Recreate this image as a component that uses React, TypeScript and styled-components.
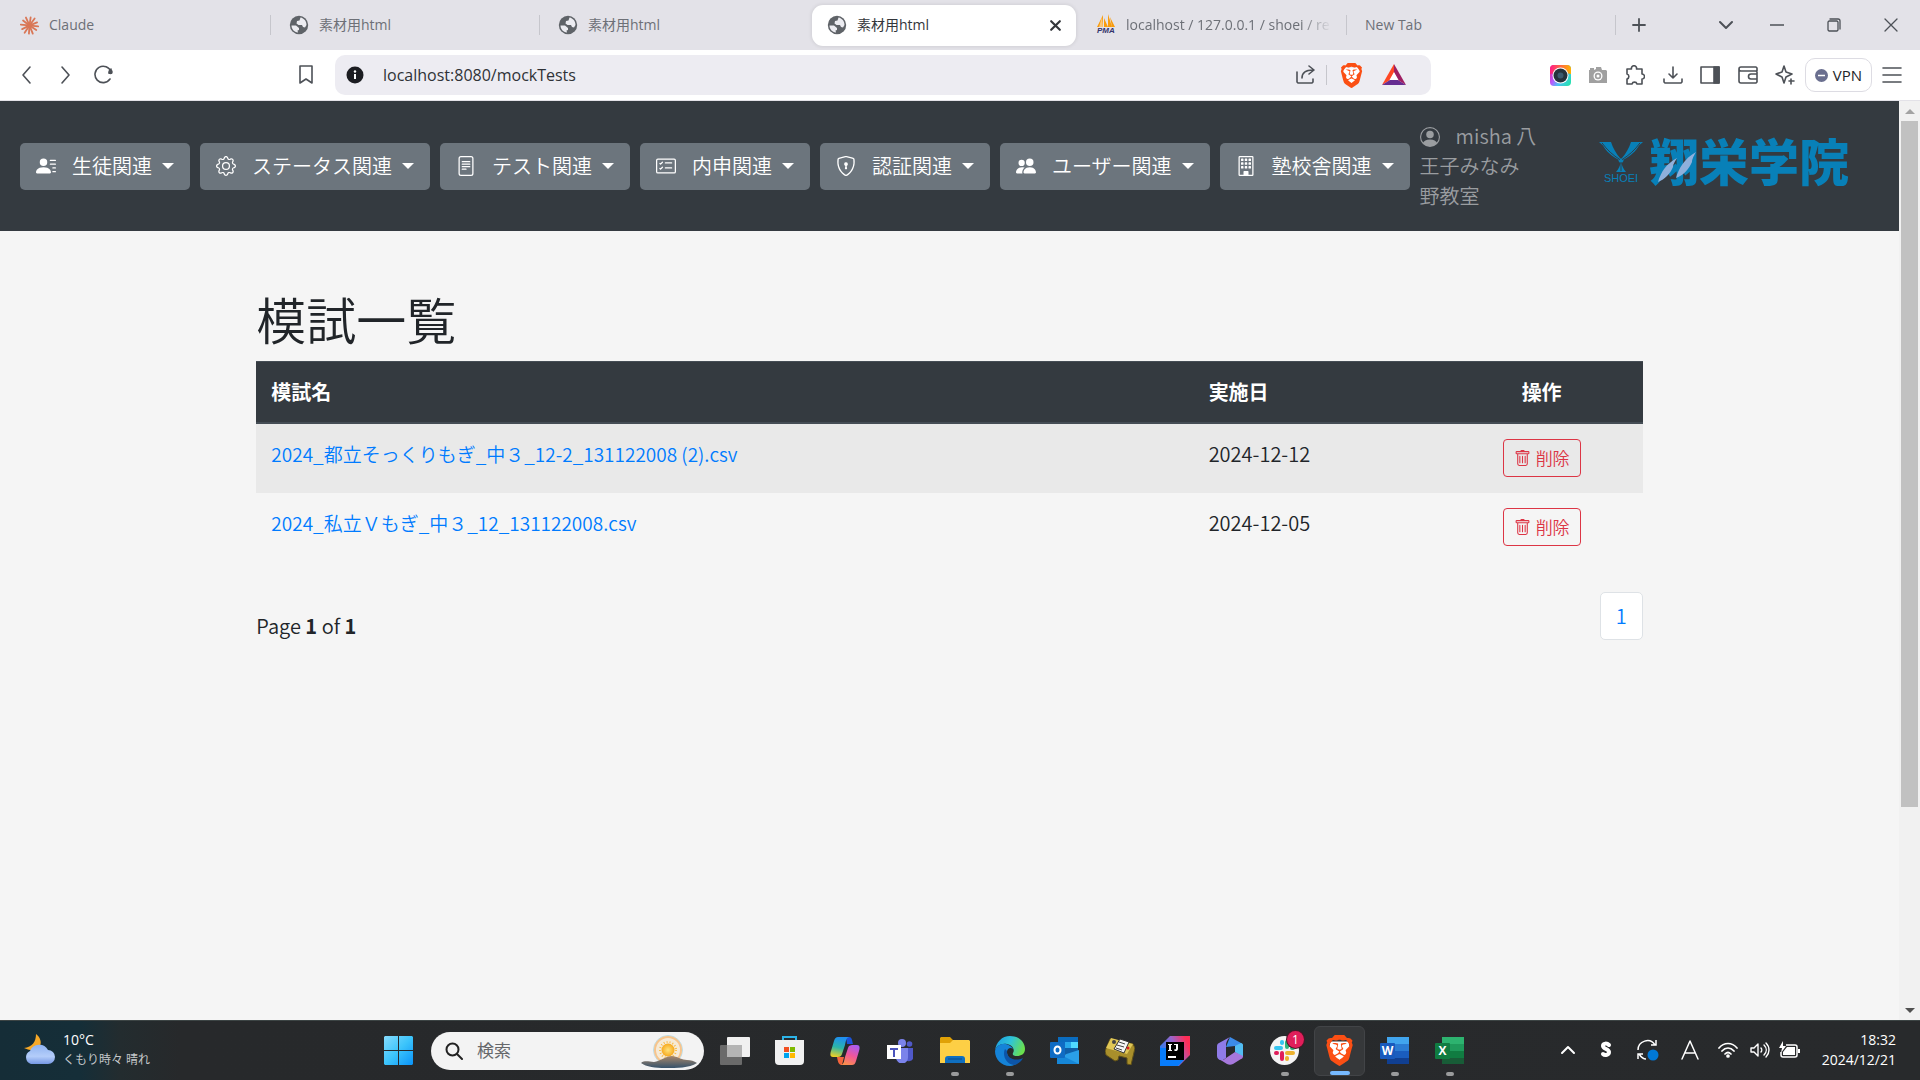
import React from "react";
import styled, { createGlobalStyle } from "styled-components";
import {
  BsPersonLinesFill,
  BsGear,
  BsFileText,
  BsCardChecklist,
  BsShieldLock,
  BsPeopleFill,
  BsBuilding,
  BsPersonCircle,
  BsTrash,
} from "react-icons/bs";
import { SiBrave } from "react-icons/si";

const GlobalStyle = createGlobalStyle`
  *, *::before, *::after { box-sizing: border-box; }
  body {
    margin: 0;
    color: #212529;
    background: #f5f5f5;
    font-family: "Noto Sans CJK JP", "Noto Sans", sans-serif;
    font-size: 20px;
    line-height: 30px;
    font-weight: 350;
  }
  button, input { font: inherit; color: inherit; }
  button { cursor: pointer; }
  svg { display: block; flex: none; }
`;

const uiFont = `"Open Sans", "Noto Sans CJK JP", sans-serif`;

const Screen = styled.div`
  display: flex;
  flex-direction: column;
  min-height: 100vh;
`;

/* ---------- browser tabs ---------- */

const TabStrip = styled.div`
  display: flex;
  align-items: center;
  height: 50px;
  padding-left: 2px;
  background: #e3e2e8;
  font-family: ${uiFont};
  font-size: 14px;
  font-weight: 400;
  line-height: 20px;
`;

const Tab = styled.button<{ $active?: boolean; $divider?: boolean }>`
  display: flex;
  align-items: center;
  gap: 10px;
  flex: 0 1 269px;
  min-width: 0;
  height: ${(p) => (p.$active ? "41px" : "20px")};
  padding: 0 14px 0 18px;
  border: 0;
  border-right: 1px solid ${(p) => (p.$divider ? "#c6c6cc" : "transparent")};
  background: transparent;
  color: #6d7077;
  text-align: left;
  white-space: nowrap;
  ${(p) =>
    p.$active &&
    `
    flex-basis: 264px;
    margin: 0 2px 0 3px;
    padding-left: 15px;
    border: 0;
    border-radius: 11px;
    background: #fff;
    color: #33363b;
    box-shadow: 0 0 4px rgba(0, 0, 0, 0.12);
  `}
`;

const TabTitle = styled.span<{ $fade?: boolean }>`
  flex: 1;
  ${(p) => p.$fade && "mask-image: linear-gradient(90deg, #000 85%, transparent);"}
`;

const IconButton = styled.button<{ $w?: number }>`
  display: flex;
  align-items: center;
  justify-content: center;
  flex: none;
  width: ${(p) => p.$w ?? 38}px;
  height: 40px;
  padding: 0;
  border: 0;
  background: transparent;
  color: #4d5157;
`;

const Spacer = styled.div<{ $w?: number }>`
  flex: ${(p) => (p.$w ? `0 0 ${p.$w}px` : "1")};
`;

/* ---------- browser toolbar ---------- */

const Toolbar = styled.div`
  display: flex;
  align-items: center;
  height: 51px;
  padding: 0 10px 0 8px;
  border-bottom: 1px solid #e3e2e8;
  background: #fff;
  font-family: ${uiFont};
  font-weight: 400;
`;

const AddressBar = styled.div`
  display: flex;
  align-items: center;
  flex: 1;
  height: 40px;
  margin: 0 111px 0 10px;
  padding: 0 16px 0 11px;
  border-radius: 10px;
  background: #edecf2;
`;

const AddressInput = styled.input`
  flex: 1;
  min-width: 0;
  margin-left: 19px;
  padding: 0;
  border: 0;
  outline: 0;
  background: transparent;
  color: #2f3237;
  font-size: 16px;
  line-height: 24px;
`;

const Rule = styled.span`
  width: 1px;
  height: 20px;
  margin: 0 4px;
  background: #c6c6cc;
`;

const VpnButton = styled.button`
  display: flex;
  align-items: center;
  gap: 5px;
  height: 34px;
  margin: 0 2px 0 1px;
  padding: 0 9px;
  border: 1px solid #dddce3;
  border-radius: 10px;
  background: #fff;
  color: #22252a;
  font-size: 15px;
`;

/* ---------- page ---------- */

const Viewport = styled.div`
  display: flex;
  flex: 1;
`;

const Page = styled.div`
  flex: 1;
  min-width: 0;
`;

const Navbar = styled.nav`
  display: flex;
  align-items: center;
  gap: 10px;
  min-height: 130px;
  padding: 10px 50px 10px 20px;
  background: #343a40;
`;

const NavButton = styled.button`
  display: flex;
  align-items: center;
  height: 47px;
  padding: 0 16px;
  border: 0;
  border-radius: 5px;
  background: #6c757d;
  color: #fff;
  white-space: nowrap;
`;

const NavLabel = styled.span`
  margin: 0 10px 0 16px;
`;

const Caret = styled.span`
  width: 0;
  height: 0;
  border: 6px solid transparent;
  border-top-color: currentColor;
  border-bottom: 0;
`;

const UserInfo = styled.div`
  width: 118px;
  color: #9a9da0;
  svg {
    display: inline-block;
    margin-right: 16px;
    vertical-align: -3px;
  }
`;

const Logo = styled.a`
  display: flex;
  align-items: center;
  gap: 6px;
  margin-left: auto;
  padding-bottom: 6px;
  color: #0880b8;
  text-decoration: none;
`;

const LogoMark = styled.span`
  display: flex;
  flex-direction: column;
  align-items: center;
  font: 11px/12px "Liberation Sans", sans-serif;
`;

const LogoName = styled.span`
  position: relative;
  padding-bottom: 8px;
  font-size: 50px;
  line-height: 50px;
  font-weight: 900;
`;

const Feather = styled.svg`
  position: absolute;
  left: 9px;
  top: 18px;
`;

const Main = styled.main`
  width: 73%;
  margin: 0 auto;
  padding-top: 57px;
`;

const Title = styled.h1`
  margin: 0 0 13px;
  font-size: 50px;
  line-height: 60px;
  font-weight: 350;
`;

const Table = styled.table`
  width: 100%;
  border-collapse: collapse;
  table-layout: fixed;
`;

const HeadCell = styled.th<{ $w?: string; $center?: boolean }>`
  width: ${(p) => p.$w ?? "auto"};
  padding: 15px;
  border-top: 1px solid #454d55;
  border-bottom: 2px solid #454d55;
  background: #343a40;
  color: #fff;
  font-weight: 700;
  text-align: ${(p) => (p.$center ? "center" : "left")};
`;

const Row = styled.tr<{ $striped?: boolean }>`
  background: ${(p) => (p.$striped ? "#e9e9e9" : "transparent")};
  & + & td {
    border-top: 1px solid #dee2e6;
  }
`;

const Cell = styled.td<{ $center?: boolean }>`
  padding: 15px 15px 16px;
  vertical-align: top;
  text-align: ${(p) => (p.$center ? "center" : "left")};
`;

const FileLink = styled.a`
  color: #007bff;
  font-size: 19px;
  text-decoration: none;
`;

const DeleteButton = styled.button`
  display: inline-flex;
  align-items: center;
  gap: 5px;
  height: 38px;
  padding: 0 10px;
  border: 1px solid #dc3545;
  border-radius: 4px;
  background: transparent;
  color: #dc3545;
  font-size: 17px;
  vertical-align: top;
`;

const TableFooter = styled.div`
  display: flex;
  align-items: flex-start;
  justify-content: space-between;
  margin-top: 30px;
`;

const PageInfo = styled.p`
  margin: 19px 0 0;
`;

const PageLink = styled.a`
  padding: 8px 15px;
  border: 1px solid #dee2e6;
  border-radius: 5px;
  background: #fff;
  color: #007bff;
  text-decoration: none;
`;

const Scrollbar = styled.div`
  display: flex;
  flex-direction: column;
  align-items: center;
  flex: 0 0 21px;
  background: #f1f1f1;
`;

const ScrollTrack = styled.div`
  flex: 1;
  width: 17px;
`;

const ScrollThumb = styled.div`
  height: 78%;
  background: #c1c1c1;
`;

const ScrollArrow = styled.span<{ $down?: boolean }>`
  margin: 8px 0 7px;
  border: 5px solid transparent;
  ${(p) =>
    p.$down
      ? "border-top-color: #505050; border-bottom: 0;"
      : "border-bottom-color: #a3a3a3; border-top: 0;"}
`;

/* ---------- taskbar ---------- */

const Taskbar = styled.footer`
  display: flex;
  align-items: center;
  height: 60px;
  border-top: 1px solid #3c4444;
  background: linear-gradient(90deg, #152d37 0, #152e38 80px, #232c2f 120px, #27292b 180px, #282a2c);
  color: #fff;
  font-family: ${uiFont};
  font-weight: 400;
`;

const Weather = styled.button`
  display: flex;
  align-items: center;
  gap: 8px;
  flex: 0 0 371px;
  padding: 0 0 2px 24px;
  border: 0;
  background: transparent;
  color: #fff;
  text-align: left;
  font-size: 14px;
  line-height: 20px;
`;

const WeatherNote = styled.span`
  display: block;
  color: #c4c8ca;
  font-size: 12px;
`;

const SearchBox = styled.label`
  display: flex;
  align-items: center;
  flex: 0 0 273px;
  min-width: 0;
  height: 38px;
  margin: 0 3px 0 5px;
  padding: 0 7px 0 14px;
  border-radius: 19px;
  background: #f3f3f3;
  color: #222;
`;

const SearchInput = styled.input`
  flex: 1;
  width: 0;
  min-width: 0;
  margin-left: 14px;
  padding: 0;
  border: 0;
  outline: 0;
  background: transparent;
  font-size: 17px;
  &::placeholder {
    color: #66686b;
    opacity: 1;
  }
`;

const AppButton = styled.button<{ $active?: boolean }>`
  display: flex;
  align-items: center;
  justify-content: center;
  position: relative;
  flex: none;
  width: ${(p) => (p.$active ? "51px" : "55px")};
  height: 50px;
  margin: ${(p) => (p.$active ? "0 2px" : "0")};
  padding: 0;
  border: ${(p) => (p.$active ? "1px solid #424447" : "0")};
  border-radius: 6px;
  background: ${(p) => (p.$active ? "#36383a" : "transparent")};
`;

const RunningMark = styled.span<{ $active?: boolean }>`
  position: absolute;
  left: 50%;
  bottom: 0;
  width: ${(p) => (p.$active ? 20 : 8)}px;
  height: 4px;
  margin-left: ${(p) => (p.$active ? -10 : -4)}px;
  border-radius: 2px;
  background: ${(p) => (p.$active ? "#76b9ff" : "#9a9b9c")};
`;

const Badge = styled.span`
  position: absolute;
  top: 5px;
  right: 8px;
  width: 17px;
  height: 17px;
  border-radius: 50%;
  background: #e01e5a;
  box-shadow: 0 0 0 1px #4b1527;
  color: #fff;
  font-size: 12px;
  line-height: 17px;
`;

const Tray = styled.div`
  display: flex;
  align-items: center;
  margin-left: auto;
  padding: 0 24px 2px 0;
`;

const TrayButton = styled(IconButton)`
  color: #fff;
`;

const Clock = styled.time`
  margin-left: 16px;
  text-align: right;
  font-size: 14px;
  line-height: 20px;
`;

/* ---------- drawings ---------- */

const Line = ({
  d,
  size = 20,
  box = 20,
  w = 1.6,
  children,
}: {
  d: string;
  size?: number;
  box?: number;
  w?: number;
  children?: React.ReactNode;
}) => (
  <svg width={size} height={size} viewBox={`0 0 ${box} ${box}`} fill="none" stroke="currentColor" strokeWidth={w} strokeLinecap="round" strokeLinejoin="round" aria-hidden="true">
    <path d={d} />
    {children}
  </svg>
);

const ClaudeIcon = () => (
  <svg width="19" height="19" viewBox="-10 -10 20 20" stroke="#d97757" strokeWidth="1.9" strokeLinecap="round" aria-hidden="true">
    {[0, 28, 62, 88, 118, 148, 180, 212, 240, 272, 300, 332].map((a, i) => (
      <line key={a} x1="1" y1="0" x2={i % 2 ? 8.6 : 9.2} y2="0" transform={`rotate(${a + 6})`} />
    ))}
  </svg>
);

const GlobeIcon = () => (
  <svg width="20" height="20" viewBox="0 0 20 20" aria-hidden="true">
    <circle cx="10" cy="10" r="9.200" fill="#5f6368" />
    <path d="M2.500 10.500h4.500l3 2.500v2l-1.500.5.500 2C5 17 2.500 14 2.500 10.500z" fill="#ececf1" />
    <path d="M11.500 2.600c3.500.7 6 3.700 6 7.400l-1.500 2.500-2-.5-1-2H9.500L7.500 8.500 8 6l2.500-.5z" fill="#ececf1" />
  </svg>
);

const PmaIcon = () => (
  <svg width="20" height="24" viewBox="0 0 20 24" aria-hidden="true">
    <path d="M7 2 1 14h6zM8 5v9h4zM12 1v13h4zM14 4l5 10h-3z" fill="#f89c0e" />
    <path d="M6 4 3 14h4z" fill="#fbc779" />
    <text x="1" y="20" fontSize="8" fontWeight="700" fontStyle="italic" fill="#34346b" fontFamily="Liberation Sans, sans-serif">PMA</text>
  </svg>
);

const BraveIcon = ({ size }: { size: number }) => (
  <svg width={size} height={size} viewBox="0 0 24 24" aria-hidden="true">
    <path d="M5 5h14l1 5-3 8-5 4-5-4-3-8z" fill="#fff" />
    <SiBrave size={24} color="#fb4f14" />
  </svg>
);

const BatIcon = () => (
  <svg width="24" height="22" viewBox="0 0 24 22" aria-hidden="true">
    <path d="M12 0 0 21l8-5 4-7z" fill="#ff4724" />
    <path d="M0 21h24l-8-5H8z" fill="#662d91" />
    <path d="m12 0 12 21-8-5-4-7z" fill="#9e1f63" />
    <path d="m12 8 4.500 8h-9z" fill="#fff" />
  </svg>
);

const CameraApp = () => (
  <svg width="21" height="21" viewBox="0 0 21 21" aria-hidden="true">
    <defs>
      <linearGradient id="cam" x1="0" y1="0.2" x2="1" y2="0.8">
        <stop offset="0" stopColor="#f0249b" />
        <stop offset="0.35" stopColor="#b65bff" />
        <stop offset="0.6" stopColor="#4fc3f7" />
        <stop offset="1" stopColor="#26e0b0" />
      </linearGradient>
      <linearGradient id="cam2" x1="0" x2="1">
        <stop offset="0" stopColor="#ff1c86" />
        <stop offset="1" stopColor="#ffb300" />
      </linearGradient>
    </defs>
    <rect width="21" height="21" rx="4" fill="url(#cam)" />
    <path d="M4 0h13a4 4 0 0 1 4 4v5L10 7 0 9V4a4 4 0 0 1 4-4z" fill="url(#cam2)" />
    <circle cx="10.500" cy="10.500" r="8" fill="#fff" />
    <circle cx="10.500" cy="10.500" r="7" fill="#26333d" />
    <circle cx="10.500" cy="10.500" r="3" fill="#3c5a6e" />
  </svg>
);

const GreyCamera = () => (
  <svg width="20" height="18" viewBox="0 0 20 18" aria-hidden="true">
    <path d="M1 4h1V2h4v2l2-1V1h5l1 3h4l1 1v12H1V5z" fill="#a0a0a0" />
    <circle cx="10" cy="10" r="4.500" fill="#fff" />
    <circle cx="10" cy="10" r="3.200" fill="#a0a0a0" />
    <circle cx="10" cy="10" r="1.500" fill="#fff" />
  </svg>
);

const ShoeiMark = () => (
  <svg width="44" height="30" viewBox="0 0 44 34" preserveAspectRatio="none" aria-hidden="true">
    <g fill="#0880b8">
      <path d="M0 0h12c2 7 5 13 9 18v3C12 16 7 10 4 4z" />
      <path d="M44 0H32c-2 7-5 13-9 18v3c9-5 14-11 17-17z" />
      <path d="M22 22c1 5 2 8 5 12H17c3-4 4-7 5-12z" />
      <circle cx="22" cy="21" r="2.500" />
    </g>
    <path d="M3 1c5 8 11 14 18 19M41 1c-5 8-11 14-18 19M22 23v10" stroke="#343a40" fill="none" />
  </svg>
);

const WeatherIcon = () => (
  <svg width="31" height="31" viewBox="0 0 31 31" aria-hidden="true">
    <defs>
      <linearGradient id="cloud" x1="0" y1="0" x2="0" y2="1">
        <stop offset="0" stopColor="#8fb3f0" />
        <stop offset="0.6" stopColor="#b4cdfa" />
        <stop offset="1" stopColor="#7598e4" />
      </linearGradient>
    </defs>
    <path d="M12 0c4 3 6 8 4 12-3 5-10 5-16 2 8-1 12-6 12-14z" fill="#f7a928" />
    <path d="M7 30a7 7 0 0 1-1-13 10 10 0 0 1 18-1 7 7 0 0 1 0 14z" fill="url(#cloud)" />
  </svg>
);

const StartIcon = () => (
  <svg width="29" height="29" viewBox="0 0 29 29" aria-hidden="true">
    <defs>
      <linearGradient id="win" x1="0" y1="0" x2="1" y2="1">
        <stop offset="0" stopColor="#87dcfd" />
        <stop offset="0.5" stopColor="#3cc4fb" />
        <stop offset="1" stopColor="#0a93f8" />
      </linearGradient>
    </defs>
    <path d="M1 0h13v14H0V1zM15 0h13l1 1v13H15zM0 15h14v14H1l-1-1zM15 15h14v13l-1 1H15z" fill="url(#win)" />
  </svg>
);

const SunArt = () => (
  <svg width="56" height="34" viewBox="0 0 56 34" aria-hidden="true">
    <defs>
      <linearGradient id="hill" x1="0" y1="0" x2="0" y2="1">
        <stop offset="0" stopColor="#a8876a" />
        <stop offset="1" stopColor="#35526b" />
      </linearGradient>
      <radialGradient id="sun">
        <stop offset="0" stopColor="#ffe27a" />
        <stop offset="1" stopColor="#f7a91e" />
      </radialGradient>
    </defs>
    <circle cx="27" cy="16" r="14.500" fill="#f6ead6" stroke="#b9dce8" />
    <circle cx="27" cy="16" r="13" fill="none" stroke="#f6c48c" strokeWidth="2" />
    <circle cx="27" cy="16" r="8" fill="none" stroke="#f8bb45" strokeWidth="2" strokeDasharray="1 2" />
    <circle cx="27" cy="16" r="6.500" fill="url(#sun)" />
    <path d="M0 29c4-3 8-1 13-1 6-1 12-6 18-6 7 1 10 4 15 4 4 0 7 1 10 3-8 5-20 5-32 5-9 0-19-1-24-5z" fill="url(#hill)" />
  </svg>
);

const TaskViewIcon = () => (
  <svg width="30" height="28" viewBox="0 0 30 28" aria-hidden="true">
    <rect x="7" width="23" height="20" rx="1" fill="#f0f0f0" />
    <rect y="8" width="22" height="20" rx="1" fill="#6a6a6a" />
    <path d="M7 8h15v12H7z" fill="#b4b4b4" />
  </svg>
);

const StoreIcon = () => (
  <svg width="29" height="29" viewBox="0 0 29 29" aria-hidden="true">
    <path d="M8 6V1h13v5" stroke="#2cb4e8" strokeWidth="2" fill="none" />
    <path d="M0 4h29v21a4 4 0 0 1-4 4H4a4 4 0 0 1-4-4z" fill="#f1f1f1" />
    <path d="M9 11h5v5H9z" fill="#f25022" />
    <path d="M15 11h5v5h-5z" fill="#7fba00" />
    <path d="M9 17h5v5H9z" fill="#00a4ef" />
    <path d="M15 17h5v5h-5z" fill="#ffb900" />
  </svg>
);

const CopilotIcon = () => (
  <svg width="30" height="28" viewBox="0 0 30 28" aria-hidden="true">
    <defs>
      <linearGradient id="cpa" x1="0.4" y1="0" x2="0.2" y2="1">
        <stop offset="0" stopColor="#1f8ff0" />
        <stop offset="0.5" stopColor="#2bb5a8" />
        <stop offset="1" stopColor="#f5d021" />
      </linearGradient>
      <linearGradient id="cpb" x1="0.7" y1="0" x2="0.3" y2="1">
        <stop offset="0" stopColor="#a95cf0" />
        <stop offset="0.5" stopColor="#f0569a" />
        <stop offset="1" stopColor="#fb8f4a" />
      </linearGradient>
    </defs>
    <path d="M16 0h3c3 0 3 3 4 7h-6z" fill="#1b53d8" />
    <path d="M7 20h7l-2 8c-3 0-4-2-5-8z" fill="#f4643c" />
    <path d="M8 0h11c-3 1-3 4-4 8l-3 9c-1 3-3 3-6 3H3c-3 0-3-3-2-6L4 4c1-3 2-4 4-4z" fill="url(#cpa)" />
    <path d="M22 28H11c3-1 3-4 4-8l3-9c1-3 3-3 6-3h3c3 0 3 3 2 6l-3 10c-1 3-2 4-4 4z" fill="url(#cpb)" />
  </svg>
);

const TeamsIcon = () => (
  <svg width="26" height="24" viewBox="0 0 26 24" aria-hidden="true">
    <circle cx="15" cy="4" r="4" fill="#7b83eb" />
    <circle cx="22.500" cy="5" r="2.800" fill="#5059c9" />
    <path d="M18 9h8v8a4 4 0 0 1-8 2z" fill="#5059c9" />
    <path d="M9 9h12v9a6 6 0 0 1-12 1z" fill="#7b83eb" />
    <path d="M0 6h14v14H0z" fill="#fff" />
    <path d="M3 9h8v2H8v7H6v-7H3z" fill="#4b53bc" />
  </svg>
);

const FolderIcon = () => (
  <svg width="30" height="27" viewBox="0 0 30 27" aria-hidden="true">
    <path d="M0 1 1 0h9l3 3h16v6H0z" fill="#e0a106" />
    <path d="M0 6h10l3-3h16l1 1v22H0z" fill="#fdcf45" />
    <path d="M5 22a3 3 0 0 1 3-3h14a3 3 0 0 1 3 3v4H5z" fill="#0f6fc0" />
    <path d="M8 22h14" stroke="#0a4a8a" />
  </svg>
);

const EdgeIcon = () => (
  <svg width="30" height="30" viewBox="0 0 30 30" aria-hidden="true">
    <defs>
      <linearGradient id="ea" x1="0" y1="0.2" x2="1" y2="0.5">
        <stop offset="0" stopColor="#1b9de2" />
        <stop offset="0.5" stopColor="#2fc4d8" />
        <stop offset="1" stopColor="#6be04c" />
      </linearGradient>
    </defs>
    <path d="M0 15C1 6 7 0 15 0c9 0 15 6 15 13 0 5-4 7-8 7-3 0-5-1-4-3 2-3 0-8-6-9C6 7 1 10 0 15z" fill="url(#ea)" />
    <path d="M0 15c1-5 6-8 11-7 4 1 6 3 7 5-2-2-6-1-6 3 0 6 6 11 13 9-3 3-6 5-10 5C6 30 0 23 0 15z" fill="#1583d8" />
    <path d="M10 13c-3 6 1 15 9 16 4-1 7-3 9-7-8 4-17 0-16-7z" fill="#0c55a8" />
  </svg>
);

const OutlookIcon = () => (
  <svg width="29" height="27" viewBox="0 0 29 27" aria-hidden="true">
    <path d="M8 0h20v16H8z" fill="#0a6cbf" />
    <path d="M15 5h6v6h-6z" fill="#28a8ea" />
    <path d="M21 5h7v6h-7z" fill="#50d9ff" />
    <path d="M15 11h13v6H15z" fill="#0f5fa8" />
    <path d="m7 20 22-7v14H7z" fill="#2a9fe8" />
    <path d="m7 16 22 11H7z" fill="#1687d8" />
    <rect y="5" width="15" height="16" rx="1" fill="#0f6cc4" />
    <ellipse cx="7.500" cy="13" rx="3" ry="3.500" fill="none" stroke="#fff" strokeWidth="2" />
  </svg>
);

const DeskIcon = () => (
  <svg width="30" height="28" viewBox="0 0 30 28" aria-hidden="true">
    <path d="M5 2 0 14l1 4 9 6 3-1 1-4 8 2v6l4 1 4-17-2-4z" fill="#a98f2b" stroke="#5f5019" />
    <path d="m6 1 22 6-6 10L1 11z" fill="#e0c757" />
    <path d="m15 2 9 3-5 11-10-4z" fill="#f6f6f6" stroke="#333" />
    <path d="m14 5 6 2m-8 1 7 2m-8 1 6 2" stroke="#444" />
    <circle cx="9" cy="5" r="2" fill="#444" />
    <circle cx="23" cy="11" r="1.500" fill="#d22" />
  </svg>
);

const IntellijIcon = () => (
  <svg width="30" height="30" viewBox="0 0 30 30" aria-hidden="true">
    <defs>
      <linearGradient id="ij" x1="0" y1="0.4" x2="1" y2="0">
        <stop offset="0" stopColor="#2f7df0" />
        <stop offset="0.45" stopColor="#9b64c8" />
        <stop offset="0.85" stopColor="#ff2d57" />
      </linearGradient>
    </defs>
    <path d="M10 0h20v19L19 30H0V10z" fill="url(#ij)" />
    <path d="M0 12h8v12h16l-6 6H0z" fill="#087cfa" />
    <path d="M6 6h18v18H6z" />
    <path d="M8 8h4v1h-1v5h1v1H8v-1h1V9H8zM14 8h4v5c0 2-3 3-4 1l1-1c1 1 1 0 1-1V9h-2zM8 20h8v2H8z" fill="#fff" />
  </svg>
);

const M365Icon = () => (
  <svg width="26" height="28" viewBox="0 0 26 28" aria-hidden="true">
    <path d="m13 0 11 6c1 1 2 2 2 4v10l-8-5V9l-9 1z" fill="#3c8be8" />
    <path d="M13 0 2 6C0 7 0 8 0 10v9c0 3 3 5 6 4l3-2V9c0-4 1-6 4-9z" fill="#8f7be8" />
    <path d="M18 9v6l8 5V9c0-2 0-2-2-3z" fill="#52bdf2" />
    <path d="M2 22c3 2 5 1 7-1l9-6 8 4c0 2-1 3-2 3l-8 5c-2 1-4 1-6 0z" fill="#a678dc" />
  </svg>
);

const SlackIcon = () => (
  <svg width="29" height="29" viewBox="0 0 29 29" aria-hidden="true">
    <circle cx="14.500" cy="14.500" r="14.500" fill="#f4f4f4" />
    <g strokeWidth="4" strokeLinecap="round" fill="none">
      <path d="M6 12h5M12 6v1" stroke="#36c5f0" />
      <path d="M17 6v5M22 12h1" stroke="#2eb67d" />
      <path d="M17 17h6M17 22v1" stroke="#ecb22e" />
      <path d="M12 17v6M6 17h1" stroke="#e01e5a" />
    </g>
  </svg>
);

const OfficeIcon = ({ shades, tile, glyph }: { shades: string[]; tile: string; glyph: string }) => (
  <svg width="29" height="27" viewBox="0 0 29 27" aria-hidden="true">
    {shades.map((c, i) => (
      <rect key={c} x="7" y={i * 7} width="22" height={i === 3 ? 6 : 7} fill={c} />
    ))}
    <rect y="6" width="15" height="16" rx="1" fill={tile} />
    <text x="7.500" y="18" fontSize="12" fontWeight="700" fill="#fff" textAnchor="middle" fontFamily="Open Sans, sans-serif">{glyph}</text>
  </svg>
);

const SyncIcon = () => (
  <svg width="22" height="22" viewBox="0 0 22 22" fill="none" stroke="#fff" strokeWidth="1.500" aria-hidden="true">
    <path d="M1 11C1 2 13-2 18 6M19 1v5h-5M9 20c-3 0-5-2-7-5M1 20v-5h5" />
    <circle cx="16" cy="16" r="5.500" fill="#0078d7" stroke="none" />
  </svg>
);

const WifiIcon = () => (
  <Line w={1.7} d="M1 8c5-6 13-6 18 0M4 11c3.500-4 8.500-4 12 0M7 14c2-2 4-2 6 0">
    <circle cx="10" cy="16" r="1" fill="currentColor" />
  </Line>
);

const BatteryIcon = () => (
  <svg width="21" height="18" viewBox="0 0 21 18" aria-hidden="true">
    <path d="M7 4h9a2 2 0 0 1 2 2v8a2 2 0 0 1-2 2H4a2 2 0 0 1-2-2v-3" fill="none" stroke="#fff" strokeWidth="1.500" />
    <path d="M8 6h8v8H4v-3zM19 8h2v4h-2zM4 0 0 7h3l-1 5 5-7H4z" fill="#fff" />
  </svg>
);

/* ---------- data ---------- */

const tabs = [
  { title: "Claude", icon: <ClaudeIcon />, divider: true },
  { title: "素材用html", icon: <GlobeIcon />, divider: true },
  { title: "素材用html", icon: <GlobeIcon /> },
  { title: "素材用html", icon: <GlobeIcon />, active: true },
  { title: "localhost / 127.0.0.1 / shoei / re", icon: <PmaIcon />, divider: true, fade: true },
  { title: "New Tab", icon: null, divider: true },
];

const menus = [
  { label: "生徒関連", Icon: BsPersonLinesFill },
  { label: "ステータス関連", Icon: BsGear },
  { label: "テスト関連", Icon: BsFileText },
  { label: "内申関連", Icon: BsCardChecklist },
  { label: "認証関連", Icon: BsShieldLock },
  { label: "ユーザー関連", Icon: BsPeopleFill },
  { label: "塾校舎関連", Icon: BsBuilding },
];

const mockTests = [
  { name: "2024_都立そっくりもぎ_中３_12-2_131122008 (2).csv", date: "2024-12-12" },
  { name: "2024_私立Ｖもぎ_中３_12_131122008.csv", date: "2024-12-05" },
];

const apps = [
  { name: "タスクビュー", icon: <TaskViewIcon /> },
  { name: "Store", icon: <StoreIcon /> },
  { name: "Copilot", icon: <CopilotIcon /> },
  { name: "Teams", icon: <TeamsIcon /> },
  { name: "エクスプローラー", icon: <FolderIcon />, running: true },
  { name: "Edge", icon: <EdgeIcon />, running: true },
  { name: "Outlook", icon: <OutlookIcon /> },
  { name: "Desk", icon: <DeskIcon /> },
  { name: "IntelliJ IDEA", icon: <IntellijIcon /> },
  { name: "Microsoft 365", icon: <M365Icon /> },
  { name: "Slack", icon: <SlackIcon />, running: true, badge: 1 },
  { name: "Brave", icon: <BraveIcon size={31} />, running: true, active: true },
  {
    name: "Word",
    icon: <OfficeIcon glyph="W" tile="#185abd" shades={["#41a5ee", "#2b7cd3", "#1a5dbe", "#103f91"]} />,
    running: true,
  },
  {
    name: "Excel",
    icon: <OfficeIcon glyph="X" tile="#107c41" shades={["#2db36f", "#1f9a5b", "#107c41", "#185c37"]} />,
    running: true,
  },
];

export default function App() {
  return (
    <Screen>
      <GlobalStyle />
      <TabStrip>
        {tabs.map((t, i) => (
          <Tab key={i} $active={t.active} $divider={t.divider}>
            {t.icon}
            <TabTitle $fade={t.fade}>{t.title}</TabTitle>
            {t.active && <Line size={13} box={12} w={2} d="M2 2l8 8M10 2l-8 8" />}
          </Tab>
        ))}
        <IconButton $w={46} aria-label="新しいタブ"><Line size={14} box={14} w={1.8} d="M7 1v12M1 7h12" /></IconButton>
        <Spacer />
        <IconButton $w={46} aria-label="タブを検索"><Line size={14} box={14} w={2} d="M1 4l6 6 6-6" /></IconButton>
        <IconButton $w={56} aria-label="最小化"><Line size={14} box={14} w={1.3} d="M0 7h14" /></IconButton>
        <IconButton $w={57} aria-label="元に戻す">
          <Line size={14} box={14} w={1.3} d="M3 1h8a2 2 0 0 1 2 2v8M2 3h8l1 1v8l-1 1H2l-1-1V4z" />
        </IconButton>
        <IconButton $w={58} aria-label="閉じる"><Line size={14} box={14} w={1.3} d="M1 1l12 12M13 1L1 13" /></IconButton>
      </TabStrip>

      <Toolbar>
        <IconButton aria-label="戻る"><Line d="M13 2L6 10l7 8" /></IconButton>
        <IconButton aria-label="進む"><Line d="M7 2l7 8-7 8" /></IconButton>
        <IconButton aria-label="再読み込み">
          <Line d="M18 4v4a2 2 0 0 1-2 0M18 7A8.200 8.200 0 1 0 17 14"><circle cx="17.500" cy="7" r="1.500" fill="currentColor" /></Line>
        </IconButton>
        <Spacer $w={165} />
        <IconButton aria-label="ブックマーク"><Line d="M4 1h12v17l-6-4-6 4z" /></IconButton>
        <AddressBar>
          <svg width="18" height="18" viewBox="0 0 18 18" aria-hidden="true">
            <circle cx="9" cy="9" r="8.500" fill="#1c1d22" />
            <path d="M9 8v5" stroke="#fff" strokeWidth="2" />
            <circle cx="9" cy="5.500" r="1.200" fill="#fff" />
          </svg>
          <AddressInput aria-label="アドレス" defaultValue="localhost:8080/mockTests" />
          <IconButton $w={32} aria-label="共有"><Line d="M1 7v10l1 1h14l1-1v-3M6 13c0-6 4-8 11-8M13 1l5 4-5 4" /></IconButton>
          <Rule />
          <IconButton $w={42} aria-label="Brave Shields"><BraveIcon size={25} /></IconButton>
          <IconButton $w={42} aria-label="Rewards"><BatIcon /></IconButton>
        </AddressBar>
        <IconButton aria-label="スクリーンショット"><CameraApp /></IconButton>
        <IconButton $w={37} aria-label="カメラ"><GreyCamera /></IconButton>
        <IconButton $w={37} aria-label="拡張機能">
          <Line d="M2 4h4.500a2.600 2.600 0 1 1 5 0H17v5a2.300 2.300 0 1 1 0 5v5h-5a2.600 2.600 0 0 0-5 0H2v-5a2.600 2.600 0 0 0 0-5z" />
        </IconButton>
        <IconButton aria-label="ダウンロード"><Line d="M10 2v11M6 9l4 4 4-4M1 14v3l1 1h16l1-1v-3" /></IconButton>
        <IconButton $w={37} aria-label="サイドバー">
          <Line d="M1 2h18v16H1z"><path d="M14 2h5v16h-5z" fill="currentColor" /></Line>
        </IconButton>
        <IconButton aria-label="ウォレット">
          <Line d="M19 6V3l-1-1H3a2 2 0 0 0 0 4h15l1 1v10l-1 1H3a2 2 0 0 1-2-2V4M19 9h-6a2 2 0 0 0 0 5h6" />
        </IconButton>
        <IconButton $w={37} aria-label="Leo AI">
          <Line d="M9 1l2 6 6 2-6 3-2 6-2-6-6-3 6-2zM16 14v5M14 16h5" />
        </IconButton>
        <VpnButton>
          <svg width="13" height="13" viewBox="0 0 13 13" aria-hidden="true">
            <circle cx="6.500" cy="6.500" r="6.500" fill="#6a6f8f" />
            <path d="M3 6.500h7" stroke="#fff" strokeWidth="1.500" />
          </svg>
          VPN
        </VpnButton>
        <IconButton $w={36} aria-label="メニュー"><Line d="M1 3h18M1 10h18M1 17h18" /></IconButton>
      </Toolbar>

      <Viewport>
        <Page>
          <Navbar>
            {menus.map(({ label, Icon }) => (
              <NavButton key={label}>
                <Icon size={20} />
                <NavLabel>{label}</NavLabel>
                <Caret />
              </NavButton>
            ))}
            <UserInfo>
              <BsPersonCircle size={20} />
              misha 八王子みなみ野教室
            </UserInfo>
            <Logo href="#" aria-label="翔栄学院">
              <LogoMark>
                <ShoeiMark />
                SHOEI
              </LogoMark>
              <LogoName>
                翔栄学院
                <Feather width="38" height="30" viewBox="0 0 38 30" aria-hidden="true">
                  <path d="M0 30C3 20 8 12 19 6c-3 5-4 7-4 9-3 7-8 12-15 15zM18 26C21 16 26 7 38 0c-3 5-4 8-4 10-3 7-8 13-16 16z" fill="#8fb0dc" />
                </Feather>
              </LogoName>
            </Logo>
          </Navbar>

          <Main>
            <Title>模試一覧</Title>
            <Table>
              <thead>
                <tr>
                  <HeadCell>模試名</HeadCell>
                  <HeadCell $w="247px">実施日</HeadCell>
                  <HeadCell $w="202px" $center>操作</HeadCell>
                </tr>
              </thead>
              <tbody>
                {mockTests.map((t, i) => (
                  <Row key={t.name} $striped={i % 2 === 0}>
                    <Cell><FileLink href="#">{t.name}</FileLink></Cell>
                    <Cell>{t.date}</Cell>
                    <Cell $center>
                      <DeleteButton><BsTrash size={17} />削除</DeleteButton>
                    </Cell>
                  </Row>
                ))}
              </tbody>
            </Table>
            <TableFooter>
              <PageInfo>Page <b>1</b> of <b>1</b></PageInfo>
              <PageLink href="#">1</PageLink>
            </TableFooter>
          </Main>
        </Page>
        <Scrollbar aria-hidden="true">
          <ScrollArrow />
          <ScrollTrack><ScrollThumb /></ScrollTrack>
          <ScrollArrow $down />
        </Scrollbar>
      </Viewport>

      <Taskbar>
        <Weather>
          <WeatherIcon />
          <span>
            10°C
            <WeatherNote>くもり時々 晴れ</WeatherNote>
          </span>
        </Weather>
        <AppButton aria-label="スタート"><StartIcon /></AppButton>
        <SearchBox>
          <Line size={18} box={18} w={2} d="M12 12l5 5"><circle cx="7.500" cy="7.500" r="6" /></Line>
          <SearchInput placeholder="検索" aria-label="検索" />
          <SunArt />
        </SearchBox>
        {apps.map((a) => (
          <AppButton key={a.name} aria-label={a.name} $active={a.active}>
            {a.icon}
            {a.badge && <Badge>{a.badge}</Badge>}
            {a.running && <RunningMark $active={a.active} />}
          </AppButton>
        ))}
        <Tray>
          <TrayButton $w={36} aria-label="隠れているインジケーター"><Line size={16} box={16} w={2} d="M2 11l6-6 6 6" /></TrayButton>
          <TrayButton $w={40} aria-label="S">
            <Line size={20} w={4} d="M13 5c-2-2-6-2-6 1s6 3 6 6-4 4-6 2" />
          </TrayButton>
          <TrayButton $w={44} aria-label="更新"><SyncIcon /></TrayButton>
          <TrayButton $w={40} aria-label="入力モード"><Line w={1.5} d="M2 19L10 1l8 18M5 13h10" /></TrayButton>
          <TrayButton $w={36} aria-label="Wi-Fi"><WifiIcon /></TrayButton>
          <TrayButton $w={28} aria-label="音量">
            <Line w={1.4} d="M1 8v4h3l4 4V4L4 8zM11 8c1 1 1 3 0 4M14 5c3 3 3 7 0 10M16 3c4 4 4 10 0 14" />
          </TrayButton>
          <TrayButton $w={32} aria-label="バッテリー"><BatteryIcon /></TrayButton>
          <Clock>
            18:32
            <br />
            2024/12/21
          </Clock>
        </Tray>
      </Taskbar>
    </Screen>
  );
}
